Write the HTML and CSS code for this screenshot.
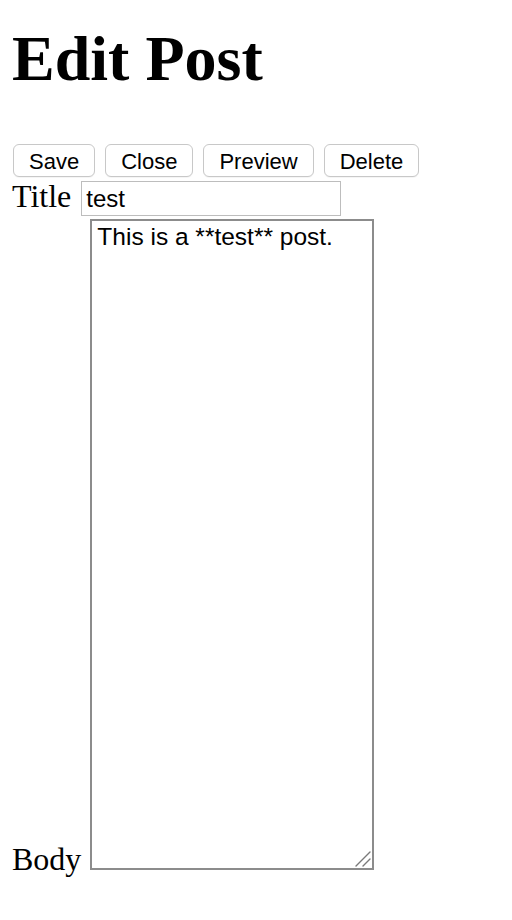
FILE: index.html
```html
<!DOCTYPE html>
<html lang="en">
<head>
<meta charset="utf-8">
<title>Edit Post</title>
<link rel="stylesheet" href="styles.css">
</head>
<body>
<div class="page">
  <h1 class="page-title">Edit Post</h1>
  <div class="toolbar">
    <button class="btn" type="button">Save</button>
    <button class="btn" type="button">Close</button>
    <button class="btn" type="button">Preview</button>
    <button class="btn" type="button">Delete</button>
  </div>
  <div class="field field-title">
    <label class="field-label" for="title">Title</label>
    <input class="title-input" id="title" type="text" value="test">
  </div>
  <div class="field field-body">
    <label class="field-label" for="body">Body</label>
    <span class="body-wrap">
      <textarea class="body-input" id="body">This is a **test** post.</textarea>
      <svg class="grip" width="18" height="18" viewBox="0 0 18 18" aria-hidden="true">
        <line x1="2" y1="16" x2="16" y2="2" />
        <line x1="9" y1="16" x2="16" y2="9" />
      </svg>
    </span>
  </div>
</div>
</body>
</html>
```
FILE: styles.css
```css
html, body {
  margin: 0;
  padding: 0;
  background: #ffffff;
}

.page {
  padding: 0 12px 40px;
  font-family: "Liberation Serif", "Times New Roman", serif;
  color: #000;
}

.page-title {
  margin: 22px 0 48px;
  font-family: "Liberation Serif", "Times New Roman", serif;
  font-weight: bold;
  font-size: 64px;
  line-height: 74px;
}

.toolbar {
  display: flex;
  gap: 10px;
  padding-left: 1px;
  margin-bottom: 4px;
}

.btn {
  box-sizing: border-box;
  height: 33px;
  margin: 0;
  padding: 2px 15px 0;
  font-family: "Liberation Sans", Arial, sans-serif;
  font-size: 22px;
  line-height: 29px;
  color: #000;
  background: #fff;
  border: 1px solid #c8c8c8;
  border-radius: 6px;
  box-shadow: 0 1px 0 rgba(0, 0, 0, 0.04);
}

.field {
  display: flex;
  gap: 9px;
}

.field-title {
  align-items: baseline;
  gap: 10px;
  height: 35px;
}

.field-body {
  align-items: flex-end;
  margin-top: 3px;
}

.field-label {
  font-family: "Liberation Serif", "Times New Roman", serif;
  font-size: 32px;
  line-height: 28px;
}

.field-body .field-label {
  margin-bottom: -3px;
}

.title-input {
  box-sizing: border-box;
  width: 260px;
  height: 35px;
  margin: 0;
  padding: 0 4px;
  font-family: "Liberation Sans", Arial, sans-serif;
  font-size: 24px;
  color: #000;
  background: #fff;
  border: 1px solid #bdbdbd;
  border-radius: 0;
  outline: none;
}

.body-wrap {
  position: relative;
  display: block;
  width: 284px;
  height: 651px;
}

.body-input {
  display: block;
  box-sizing: border-box;
  width: 284px;
  height: 651px;
  margin: 0;
  padding: 2px 5px;
  font-family: "Liberation Sans", Arial, sans-serif;
  font-size: 24.5px;
  color: #000;
  background: #fff;
  border: 2px solid #8c8c8c;
  border-radius: 0;
  outline: none;
  resize: none;
}

.grip {
  position: absolute;
  right: 2px;
  bottom: 2px;
}

.grip line {
  stroke: #7a7a7a;
  stroke-width: 1.4;
  stroke-linecap: round;
}
```
